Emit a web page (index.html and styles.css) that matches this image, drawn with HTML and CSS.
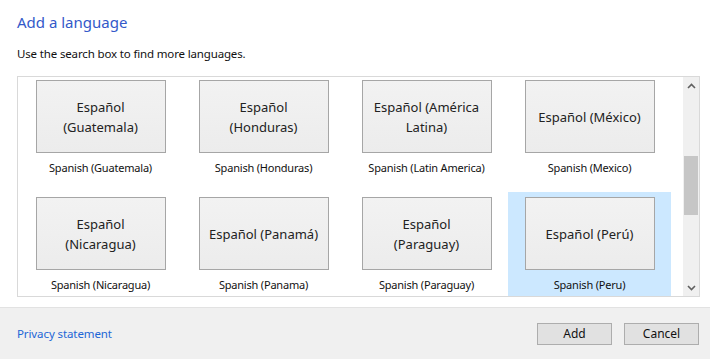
FILE: index.html
```html
<!DOCTYPE html>
<html lang="en">
<head>
    <meta charset="UTF-8">
    <title>Add a language</title>
    <link rel="stylesheet" href="styles.css">
</head>
<body>
    <div class="dialog">
        <h1 class="title">Add a language</h1>
        <p class="hint">Use the search box to find more languages.</p>

        <div class="list-box">
            <div class="grid">
                <div class="cell">
                    <div class="tile">Español<br>(Guatemala)</div>
                    <div class="name">Spanish (Guatemala)</div>
                </div>
                <div class="cell">
                    <div class="tile">Español<br>(Honduras)</div>
                    <div class="name">Spanish (Honduras)</div>
                </div>
                <div class="cell">
                    <div class="tile">Español (América<br>Latina)</div>
                    <div class="name">Spanish (Latin America)</div>
                </div>
                <div class="cell">
                    <div class="tile">Español (México)</div>
                    <div class="name">Spanish (Mexico)</div>
                </div>
                <div class="cell">
                    <div class="tile">Español<br>(Nicaragua)</div>
                    <div class="name">Spanish (Nicaragua)</div>
                </div>
                <div class="cell">
                    <div class="tile">Español (Panamá)</div>
                    <div class="name">Spanish (Panama)</div>
                </div>
                <div class="cell">
                    <div class="tile">Español<br>(Paraguay)</div>
                    <div class="name">Spanish (Paraguay)</div>
                </div>
                <div class="cell selected">
                    <div class="tile">Español (Perú)</div>
                    <div class="name">Spanish (Peru)</div>
                </div>
            </div>
            <div class="scrollbar">
                <div class="arrow">
                    <svg width="9" height="6" viewBox="0 0 9 6"><polyline points="1,5 4.5,1.5 8,5" fill="none" stroke="#606060" stroke-width="1.6"/></svg>
                </div>
                <div class="track">
                    <div class="thumb"></div>
                </div>
                <div class="arrow">
                    <svg width="9" height="6" viewBox="0 0 9 6"><polyline points="1,1 4.5,4.5 8,1" fill="none" stroke="#606060" stroke-width="1.6"/></svg>
                </div>
            </div>
        </div>

        <div class="footer">
            <a class="privacy" href="#">Privacy statement</a>
            <div class="buttons">
                <button class="btn">Add</button>
                <button class="btn">Cancel</button>
            </div>
        </div>
    </div>
</body>
</html>
```

FILE: styles.css
```css
body {
    margin: 0;
    background: #ffffff;
    font-family: "Noto Sans", "Open Sans", sans-serif;
    color: #1a1a1a;
}
.dialog {
    width: 710px;
    height: 359px;
    display: flex;
    flex-direction: column;
    overflow: hidden;
}
.title {
    margin: 11px 0 0 17px;
    font-size: 15px;
    font-weight: normal;
    line-height: 22px;
    color: #3359c9;
}
.hint {
    margin: 13px 0 0 17px;
    font-size: 11.5px;
    letter-spacing: -0.15px;
    line-height: 16px;
    color: #111111;
}
.list-box {
    margin: 14px 10px 0 17px;
    height: 219px;
    border: 1px solid #d9d9d9;
    display: flex;
    overflow: hidden;
}
.grid {
    flex: 1;
    display: grid;
    grid-template-columns: repeat(4, 163px);
    grid-auto-rows: 104px;
    row-gap: 13px;
    padding-left: 1px;
    margin-top: -2px;
}
.cell {
    display: flex;
    flex-direction: column;
    align-items: center;
}
.cell.selected {
    background: #cce8ff;
}
.tile {
    width: 128px;
    height: 71px;
    margin-top: 5px;
    border: 1px solid #a6a6a6;
    background: linear-gradient(#f2f2f2, #ececec);
    display: flex;
    align-items: center;
    justify-content: center;
    text-align: center;
    font-size: 13px;
    line-height: 20px;
    color: #222222;
}
.name {
    margin-top: 7px;
    font-size: 11px;
    letter-spacing: -0.2px;
    line-height: 16px;
    color: #111111;
}
.scrollbar {
    width: 16px;
    background: #f0f0f0;
    display: flex;
    flex-direction: column;
}
.arrow {
    height: 17px;
    display: flex;
    align-items: center;
    justify-content: center;
}
.track {
    flex: 1;
    padding-top: 62px;
}
.thumb {
    height: 59px;
    margin: 0 1px;
    background: #c6c6c6;
}
.footer {
    margin-top: 10px;
    flex: 1;
    background: #f0f0f0;
    border-top: 1px solid #e2e2e2;
    display: flex;
    align-items: center;
    justify-content: space-between;
    padding: 0 11px 0 17px;
}
.privacy {
    font-size: 11.5px;
    letter-spacing: -0.1px;
    color: #1d66d6;
    text-decoration: none;
}
.buttons {
    display: flex;
    gap: 12px;
}
.btn {
    width: 75px;
    height: 22px;
    padding: 0;
    background: #e1e1e1;
    border: 1px solid #adadad;
    font-family: inherit;
    font-size: 12px;
    color: #111111;
}
```
